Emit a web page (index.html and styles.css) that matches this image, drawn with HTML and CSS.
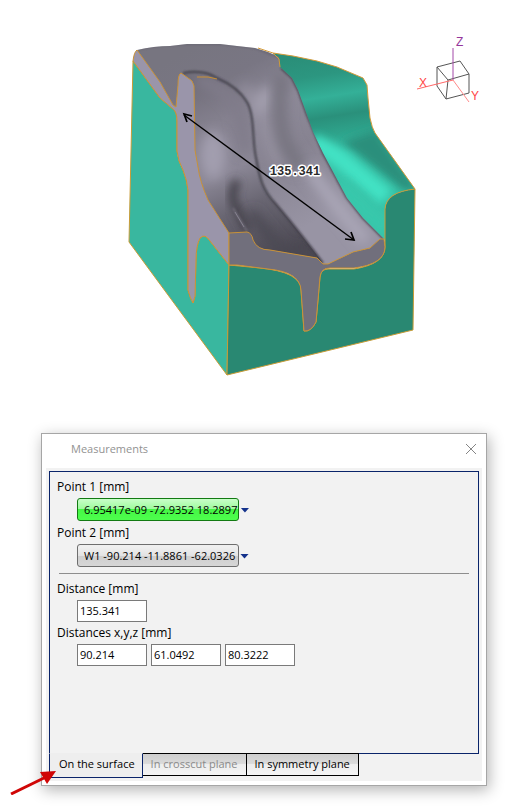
FILE: index.html
```html
<!DOCTYPE html>
<html lang="en">
<head>
<meta charset="utf-8">
<meta name="viewport" content="width=device-width, initial-scale=1">
<title>Measurements</title>
<link rel="stylesheet" href="styles.css">
</head>
<body>
<main class="workspace">
  <svg class="scene" viewBox="0 0 513 433" role="img" aria-label="Section model with a measured distance">
    <defs>
      <linearGradient id="back" gradientUnits="userSpaceOnUse" x1="318" y1="55" x2="334" y2="155">
        <stop offset="0" stop-color="#2a8f79"/>
        <stop offset=".2" stop-color="#2c9680"/>
        <stop offset=".42" stop-color="#34b098"/>
        <stop offset=".62" stop-color="#2a907b"/>
        <stop offset=".8" stop-color="#2ea48c"/>
        <stop offset="1" stop-color="#37c3a8"/>
      </linearGradient>
      <linearGradient id="shell" gradientUnits="userSpaceOnUse" x1="200" y1="44" x2="300" y2="230">
        <stop offset="0" stop-color="#777580"/>
        <stop offset=".2" stop-color="#797683"/>
        <stop offset=".42" stop-color="#8d8998"/>
        <stop offset=".65" stop-color="#878391"/>
        <stop offset="1" stop-color="#9894a4"/>
      </linearGradient>
      <linearGradient id="pocket" gradientUnits="userSpaceOnUse" x1="205" y1="75" x2="282" y2="255">
        <stop offset="0" stop-color="#6f6c78"/>
        <stop offset=".25" stop-color="#85818f"/>
        <stop offset=".5" stop-color="#8b8796"/>
        <stop offset=".7" stop-color="#696672"/>
        <stop offset="1" stop-color="#4b4852"/>
      </linearGradient>
      <filter id="soft1" x="-30%" y="-30%" width="160%" height="160%"><feGaussianBlur stdDeviation="1"/></filter>
      <filter id="soft3" x="-50%" y="-50%" width="200%" height="200%"><feGaussianBlur stdDeviation="4"/></filter>
      <filter id="soft6" x="-60%" y="-60%" width="220%" height="220%"><feGaussianBlur stdDeviation="6"/></filter>
      <path id="shellShape" d="M137 50Q154 46 170 46L187 44H220L237 46L255 48L268 52L279 57L280 67L292 78L298 90L307 115L313 132L323 153L347 198L363 218L384 239L370 248L353 252L328 264H323L317 258L260 249L229 233L178 120L160 90Z"/>
      <path id="pocketShape" d="M181 73Q204 70 217 78Q239 88 248 103C255 116 252 140 256 158C260 180 263 190 275 203C288 218 307 242 323 263L317 258L270 250Q258 249 255 245L247 234H225L195 195L190 150V85Z"/>
      <path id="backShape" d="M273 53L293 56L317 61L337 67L363 78L367 85L368 98L370 118Q372 128 375 133L390 154L415 189Q386 192 385 209V240L350 218L305 153L285 90L277 67Z"/>
      <clipPath id="shellClip"><use href="#shellShape"/></clipPath>
      <clipPath id="pocketClip"><use href="#pocketShape"/></clipPath>
      <clipPath id="backClip"><use href="#backShape"/></clipPath>
    </defs>

    <use href="#backShape" fill="url(#back)"/>
    <g clip-path="url(#backClip)">
      <path d="M342 142Q362 134 376 130L420 192L404 191Q378 170 342 142Z" fill="#2a8f7b" filter="url(#soft3)"/>
      <path d="M312 142Q334 152 351 168L386 197" fill="none" stroke="#42e2c4" stroke-width="17" filter="url(#soft3)"/>
      <path d="M340 185L387 230" stroke="#38c8ac" stroke-width="16" filter="url(#soft3)"/>
    </g>
    <use href="#shellShape" fill="url(#shell)"/>
    <g clip-path="url(#shellClip)">
      <path d="M242 87Q257 102 264 120L279 165" fill="none" stroke="#94909f" stroke-width="12" filter="url(#soft6)"/>
      <ellipse cx="263" cy="100" rx="8" ry="15" fill="#a39fae" transform="rotate(28 263 100)" filter="url(#soft6)"/>
      <path d="M282 75Q276 120 286 145L302 170" fill="none" stroke="#777480" stroke-width="14" filter="url(#soft6)"/>
      <path d="M308 168L344 215L366 241" fill="none" stroke="#aba7b8" stroke-width="12" filter="url(#soft6)"/>
      <path d="M281 68L292 78L298 90L307 115L323 153L347 198L363 218L384 239" fill="none" stroke="#45434d" stroke-width="2" filter="url(#soft1)"/>
      <path d="M139 49Q158 45 187 44H222L255 48L280 58" fill="none" stroke="#5d5b66" stroke-width="1" filter="url(#soft1)"/>
    </g>
    <use href="#pocketShape" fill="url(#pocket)"/>
    <g clip-path="url(#pocketClip)">
      <path d="M196 79Q224 86 239 111L246 153" fill="none" stroke="#807c8a" stroke-width="12" filter="url(#soft6)"/>
      <ellipse cx="213" cy="155" rx="13" ry="24" fill="#a29eaf" filter="url(#soft6)"/>
      <path d="M238 181Q228 194 237 209L248 230" fill="none" stroke="#47444e" stroke-width="9" filter="url(#soft3)"/>
      <path d="M250 212L282 251L317 258" fill="none" stroke="#4b4853" stroke-width="10" filter="url(#soft6)"/>
      <path d="M233 208L247 231" stroke="#8c8896" stroke-width="1" filter="url(#soft1)"/>
      <path d="M235 212L244 227" stroke="#85818f" stroke-width="1"/>
    </g>
    <path d="M183 73Q203 69 217 78Q238 87 247 102C255 116 252 140 256 158C260 180 263 190 275 203C288 218 307 242 323 263" fill="none" stroke="#42404a" stroke-width="2" filter="url(#soft1)"/>
    <path d="M197 77H208L217 79" fill="none" stroke="#c98f32"/>

    <path d="M133 61L160 98L173 109Q177 112 177 121V151Q178 161 183 170Q187 180 188 190V290Q190 298 193 303L195 296L196 260Q196 246 200 238Q205 233 210 241L229 265L227 375L129 242Z" fill="#39b79f" stroke="#c99c37"/>
    <path d="M137 50Q134 52 133 61L160 98L173 109Q177 112 177 121V151Q178 161 183 170Q187 180 188 190V290Q190 298 193 303L195 296L196 260Q196 246 200 238Q205 233 210 241L229 265V233L220 219L208 200Q200 182 198 167L195 150L194 86Q193 80 188 78L181 73Q178 74 178 85L176 107L173 105L160 82Z" fill="#9a95aa" stroke="#c99237"/>
    <path d="M229 265L260 268Q301 272 301 290L304 331Q311 332 316 322L318 300L320 277Q321 268 330 269H354Q385 264 385 247V209Q386 192 415 189L413 330L227 375Z" fill="#298872" stroke="#c99c37"/>
    <path d="M229 233L247 232Q252 233 253 240Q257 250 270 250L317 258L323 264H328L353 252L370 248L380 239H384L385 247Q385 264 354 268H330Q321 268 320 277L318 300L316 322Q311 332 304 331L301 290Q300 272 268 269L237 265H229Z" fill="#716f7c" stroke="#c99237"/>
    <path d="M273 53L293 56L317 61L337 67L363 78L367 85L368 98L370 118Q372 128 375 133L390 154L415 189M258 48L273 53L279 59L280 67" fill="none" stroke="#d49b3a"/>

    <g fill="none" stroke="#000">
      <path d="M184 115L354 240" stroke-width="1.4"/>
      <path d="M192 116L184 114L187 122M351 232L354 240L345 239" stroke-width="1.7"/>
    </g>
    <text class="scene-value" x="295" y="175">135.341</text>

    <g fill="none" stroke="#555" stroke-width="1">
      <path d="M437 67L460 61L469 74L448 80ZM437 67V86L446 99L448 80M446 99L469 93V74"/>
      <path d="M453 48V80" stroke="#a348a8"/>
      <path d="M417 89L453 80" stroke="#ff6868"/>
      <path d="M453 80L469 102" stroke="#ff8a8a"/>
    </g>
    <text class="axis axis-z" x="456" y="46">Z</text>
    <text class="axis axis-x" x="419" y="87">X</text>
    <text class="axis axis-y" x="471" y="100">Y</text>
  </svg>

  <section class="dialog" aria-labelledby="dialog-title">
    <header class="titlebar">
      <h1 class="title" id="dialog-title">Measurements</h1>
      <button class="close" type="button" aria-label="Close">
        <svg width="12" height="12" viewBox="0 0 12 12"><path d="M1 1L11 11M11 1L1 11" fill="none" stroke="#858585"/></svg>
      </button>
    </header>
    <div class="content">
      <form class="panel">
        <label class="label" for="point1">Point 1 [mm]</label>
        <div class="row point-row">
          <button class="point active" id="point1" type="button">6.95417e-09 -72.9352 18.2897</button>
          <button class="caret" type="button" aria-label="Point 1 options"></button>
        </div>
        <label class="label" for="point2">Point 2 [mm]</label>
        <div class="row point-row">
          <button class="point" id="point2" type="button">W1 -90.214 -11.8861 -62.0326</button>
          <button class="caret" type="button" aria-label="Point 2 options"></button>
        </div>
        <hr class="divider">
        <label class="label" for="distance">Distance [mm]</label>
        <div class="row">
          <input class="field" id="distance" type="text" value="135.341">
        </div>
        <label class="label" for="dx">Distances x,y,z [mm]</label>
        <div class="row">
          <input class="field" id="dx" type="text" value="90.214">
          <input class="field" type="text" aria-label="Distance y" value="61.0492">
          <input class="field" type="text" aria-label="Distance z" value="80.3222">
        </div>
      </form>
      <nav class="tabs">
        <button class="tab selected" type="button">On the surface</button>
        <button class="tab" type="button" disabled>In crosscut plane</button>
        <button class="tab" type="button">In symmetry plane</button>
      </nav>
    </div>
    <svg class="pointer" width="48" height="26" viewBox="0 0 48 26" aria-hidden="true">
      <path d="M1 25L36 8" stroke="#d00606" stroke-width="3"/>
      <path d="M46 2L30 3L37 15Z" fill="#d00606"/>
    </svg>
  </section>
</main>
</body>
</html>
```
FILE: styles.css
```css
* {
  box-sizing: border-box;
}

body {
  margin: 0;
  background: #fff;
  color: #000;
  font: 12px/16px "Open Sans", "Noto Sans", sans-serif;
}

button,
input {
  margin: 0;
  font: inherit;
  font-size: 11px;
  color: inherit;
}

.workspace {
  display: flex;
  flex-direction: column;
}

.scene {
  display: block;
  width: 100%;
}

.scene-value {
  font: bold 12px "Liberation Mono", monospace;
  text-anchor: middle;
  fill: #2a2a2a;
  stroke: #fff;
  stroke-width: 3px;
  stroke-linejoin: round;
  paint-order: stroke;
}

.axis {
  font: 12px "Liberation Sans", sans-serif;
}

.axis-x,
.axis-y {
  fill: #ff4545;
}

.axis-z {
  fill: #95359b;
}

.dialog {
  position: relative;
  margin: 0 26px 24px 41px;
  padding: 0 4px 4px;
  border: 1px solid #a6a6a6;
  background: #fff;
  box-shadow: 2px 4px 14px rgba(0, 0, 0, 0.3);
}

.titlebar {
  display: flex;
  align-items: center;
  justify-content: space-between;
  height: 34px;
  padding: 0 4px 4px 25px;
}

.title {
  margin: 0;
  font-size: 11px;
  font-weight: 400;
  color: #929292;
}

.close {
  display: flex;
  padding: 1px;
  border: 0;
  background: none;
}

.content {
  padding: 3px 3px 4px 3px;
  background: #f2f2f2;
}

.panel {
  min-height: 283px;
  padding: 4px 9px 4px 7px;
  border: 1px solid #0a246a;
}

.label {
  display: block;
  height: 22px;
  line-height: 22px;
}

.row {
  display: flex;
  gap: 4px;
  padding-left: 20px;
}

.point-row {
  gap: 0;
  height: 24px;
}

.point {
  min-width: 162px;
  height: 23px;
  padding: 0 1px 0 6px;
  border: 1px solid #6e6e6e;
  border-radius: 3px;
  background: linear-gradient(#efefef 0 10%, #e3e3e3 50%, #cecece 50%, #d6d6d6);
  text-align: left;
  white-space: nowrap;
}

.point.active {
  border-color: #137a13;
  background: linear-gradient(#c9ffc9, #9bfa9b 50%, #45f745 50%, #4dff4d);
}

.caret {
  align-self: center;
  width: 9px;
  height: 5px;
  margin-left: 1px;
  padding: 0;
  border: 0;
  background: #14328c;
  clip-path: polygon(0 0, 100% 0, 50% 100%);
}

.divider {
  height: 1px;
  margin: 5px 0 4px 2px;
  border: 0;
  background: #8e8e8e;
}

.field {
  width: 70px;
  height: 22px;
  padding: 0 2px 2px;
  border: 1px solid #7a7a7a;
  border-radius: 0;
  background: #fff;
}

.tabs {
  display: flex;
  align-items: flex-start;
  height: 24px;
  margin-top: -1px;
}

.tab {
  height: 23px;
  margin-right: -1px;
  padding: 0 8px 2px;
  border: 1px solid #000;
  background: linear-gradient(#cecece, #dadada 45%, #ededed 50%, #f4f4f4);
  white-space: nowrap;
}

.tab:disabled {
  color: #8a8a8a;
}

.tab.selected {
  position: relative;
  height: 25px;
  padding: 0 7px 4px 9px;
  border-color: #0a246a;
  border-top-color: #eee;
  background: #eee;
}

.pointer {
  position: absolute;
  left: -32px;
  bottom: -10px;
}
```
